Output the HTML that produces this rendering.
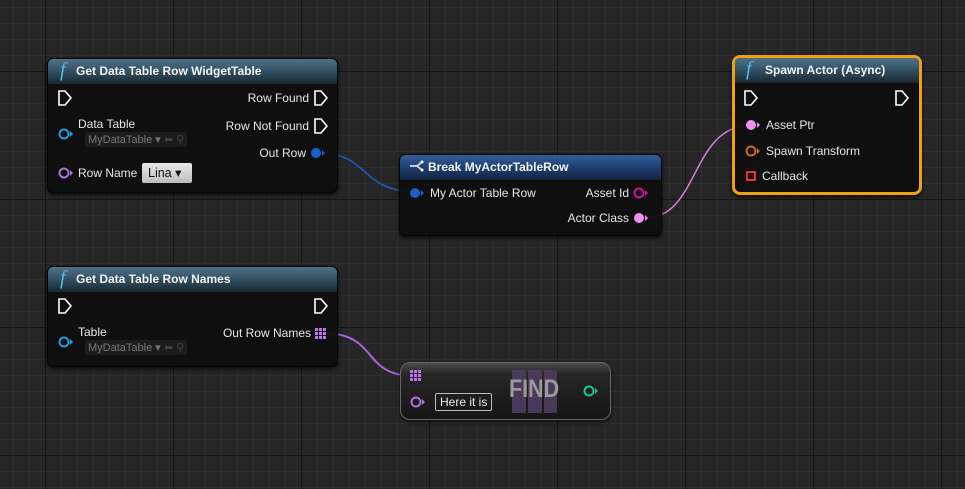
<!DOCTYPE html>
<html><head><meta charset="utf-8"><style>
*{margin:0;padding:0;box-sizing:border-box}
body{width:965px;height:489px;overflow:hidden;position:relative;font-family:"Liberation Sans",sans-serif;
background-color:#262626;
background-image:
linear-gradient(90deg,#141414 0,#141414 1px,transparent 1px),
linear-gradient(0deg,#141414 0,#141414 1px,transparent 1px),
linear-gradient(90deg,#2f2f2f 0,#2f2f2f 1px,transparent 1px),
linear-gradient(0deg,#2f2f2f 0,#2f2f2f 1px,transparent 1px);
background-size:128px 128px,128px 128px,16px 16px,16px 16px;
background-position:45px 0,0 72px,13px 0,0 8px;}
.n{position:absolute;background:rgba(14,14,14,0.94);border-radius:6px;box-shadow:0 2px 4px rgba(0,0,0,.7);border:1px solid #050505}
.h{height:25px;border-radius:5px 5px 0 0;color:#f2f2f2;font-weight:bold;font-size:12px;line-height:24px;padding-left:28px;position:relative;
background:linear-gradient(180deg,#4f7288 0,#36566b 40%,#1a2830 100%)}
.h.b{background:linear-gradient(180deg,#355f96 0,#20447a 40%,#132440 100%)}
.h i{position:absolute;left:12px;top:-1px;font-family:"Liberation Serif",serif;font-size:20px;color:#5cb8f0;font-weight:normal}
.t{position:absolute;color:#e6e6e6;font-size:12px;white-space:nowrap}
.r{text-align:right}
.d{position:absolute;color:#777;font-size:11px;background:#1c1c1c;border-radius:2px;padding:1px 3px;white-space:nowrap}
svg{position:absolute;left:0;top:0}
</style></head><body>
<svg width="965" height="489" style="z-index:0">
<path d="M319,153 C370,153 360,192 417,192" stroke="#1a5fc8" stroke-width="1.5" fill="none"/>
<path d="M645,218 C700,218 690,125 752,125" stroke="#e07ae0" stroke-width="1.5" fill="none"/>
<path d="M322,333 C380,333 360,376 415,376" stroke="#b060e0" stroke-width="2" fill="none"/>
</svg>

<div class="n" style="left:47px;top:58px;width:291px;height:135px">
<div class="h"><i>f</i>Get Data Table Row WidgetTable</div></div>
<div class="n" style="left:47px;top:266px;width:291px;height:101px">
<div class="h"><i>f</i>Get Data Table Row Names</div></div>
<div class="n" style="left:399px;top:154px;width:263px;height:82px">
<div class="h b">Break MyActorTableRow</div></div>
<div class="n" style="left:732px;top:55px;width:190px;height:140px;border:3px solid #f0a010;border-radius:8px;background:rgba(14,14,14,0.95)">
<div class="h" style="border-radius:4px 4px 0 0;padding-left:30px"><i style="left:11px">f</i>Spawn Actor (Async)</div></div>
<div class="n" style="left:400px;top:362px;width:211px;height:58px;border-radius:10px;background:linear-gradient(180deg,#4a4a4a 0,#262626 20%,#151515 100%);border:1px solid #666"></div>

<div style="position:absolute;left:512px;top:370px;width:14px;height:43px;background:#4a3a5a"></div>
<div style="position:absolute;left:528px;top:370px;width:14px;height:43px;background:#4a3a5a"></div>
<div style="position:absolute;left:544px;top:370px;width:13px;height:43px;background:#4a3a5a"></div>
<div style="position:absolute;left:509px;top:375px;font-size:25px;font-weight:bold;color:#9a9a9a;transform:scaleX(0.86);transform-origin:0 0">FIND</div>

<svg width="965" height="489">
<defs>
<g id="ex"><path d="M0,0 h6 l6,7 l-6,7 h-6 z" stroke="#fff" stroke-width="1.6" fill="none"/></g>
</defs>
<use href="#ex" x="59" y="91"/>
<use href="#ex" x="315" y="91"/>
<use href="#ex" x="315" y="119"/>
<use href="#ex" x="59" y="299"/>
<use href="#ex" x="315" y="299"/>
<use href="#ex" x="745" y="91"/>
<use href="#ex" x="896" y="91"/>
<circle cx="64" cy="134" r="4.5" stroke="#1aa0e0" stroke-width="2" fill="none"/><path d="M70,131 l3,3 l-3,3z" fill="#1aa0e0"/>
<circle cx="64" cy="173" r="4.5" stroke="#b070e0" stroke-width="2" fill="none"/><path d="M70,170 l3,3 l-3,3z" fill="#b070e0"/>
<circle cx="316" cy="153" r="5" fill="#1a5fc8"/><path d="M322,150 l3,3 l-3,3z" fill="#1a5fc8"/>
<circle cx="64" cy="342" r="4.5" stroke="#1aa0e0" stroke-width="2" fill="none"/><path d="M70,339 l3,3 l-3,3z" fill="#1aa0e0"/>
<g fill="#c070f0"><rect x="315" y="328" width="3" height="3"/><rect x="319" y="328" width="3" height="3"/><rect x="323" y="328" width="3" height="3"/><rect x="315" y="332" width="3" height="3"/><rect x="319" y="332" width="3" height="3"/><rect x="323" y="332" width="3" height="3"/><rect x="315" y="336" width="3" height="3"/><rect x="319" y="336" width="3" height="3"/><rect x="323" y="336" width="3" height="3"/></g>
<circle cx="415" cy="193" r="5" fill="#1a5fc8"/><path d="M421,190 l3,3 l-3,3z" fill="#1a5fc8"/>
<circle cx="639" cy="193" r="4.5" stroke="#d010a0" stroke-width="2" fill="none"/><path d="M645,190 l3,3 l-3,3z" fill="#d010a0"/>
<circle cx="639" cy="218" r="5" fill="#f090f0"/><path d="M645,215 l3,3 l-3,3z" fill="#f090f0"/>
<circle cx="751" cy="125" r="5" fill="#f090f0"/><path d="M757,122 l3,3 l-3,3z" fill="#f090f0"/>
<circle cx="751" cy="151" r="4.5" stroke="#d06a10" stroke-width="2" fill="none"/><path d="M757,148 l3,3 l-3,3z" fill="#d06a10"/>
<rect x="747" y="172" width="8" height="8" stroke="#f03030" stroke-width="2" fill="none"/>
<g fill="#c070f0"><rect x="410" y="370" width="3" height="3"/><rect x="414" y="370" width="3" height="3"/><rect x="418" y="370" width="3" height="3"/><rect x="410" y="374" width="3" height="3"/><rect x="414" y="374" width="3" height="3"/><rect x="418" y="374" width="3" height="3"/><rect x="410" y="378" width="3" height="3"/><rect x="414" y="378" width="3" height="3"/><rect x="418" y="378" width="3" height="3"/></g>
<circle cx="416" cy="402" r="4.5" stroke="#b070e0" stroke-width="2" fill="none"/><path d="M422,399 l3,3 l-3,3z" fill="#b070e0"/>
<circle cx="589" cy="391" r="4.5" stroke="#20c090" stroke-width="2" fill="none"/><path d="M595,388 l3,3 l-3,3z" fill="#20c090"/>
<path d="M410,166 h7 M417,166 l5,-4 M417,166 l5,4" stroke="#ccd" stroke-width="2" fill="none"/><circle cx="422" cy="162" r="1.5" fill="#fff"/><circle cx="422" cy="170" r="1.5" fill="#fff"/>
</svg>

<div class="t r" style="right:656px;top:91px">Row Found</div>
<div class="t r" style="right:656px;top:119px">Row Not Found</div>
<div class="t r" style="right:659px;top:146px">Out Row</div>
<div class="t" style="left:78px;top:117px">Data Table</div>
<div class="d" style="left:85px;top:132px">MyDataTable ▾ <span style="color:#444">⬅ ⚲</span></div>
<div class="t" style="left:78px;top:166px">Row Name</div>
<div style="position:absolute;left:142px;top:163px;width:50px;height:20px;background:linear-gradient(#e8e8e8,#bdbdbd);border-radius:2px;color:#111;font-size:12.5px;line-height:20px;padding-left:6px">Lina ▾</div>
<div class="t" style="left:78px;top:325px">Table</div>
<div class="d" style="left:85px;top:340px">MyDataTable ▾ <span style="color:#444">⬅ ⚲</span></div>
<div class="t r" style="right:654px;top:326px">Out Row Names</div>
<div class="t" style="left:430px;top:186px">My Actor Table Row</div>
<div class="t r" style="right:336px;top:186px">Asset Id</div>
<div class="t r" style="right:336px;top:211px">Actor Class</div>
<div class="t" style="left:766px;top:118px">Asset Ptr</div>
<div class="t" style="left:766px;top:144px">Spawn Transform</div>
<div class="t" style="left:762px;top:169px">Callback</div>
<div style="position:absolute;left:435px;top:393px;height:18px;border:1px solid #bbb;color:#eee;font-size:12px;line-height:16px;padding:0 4px;border-radius:2px">Here it is</div>
</body></html>
